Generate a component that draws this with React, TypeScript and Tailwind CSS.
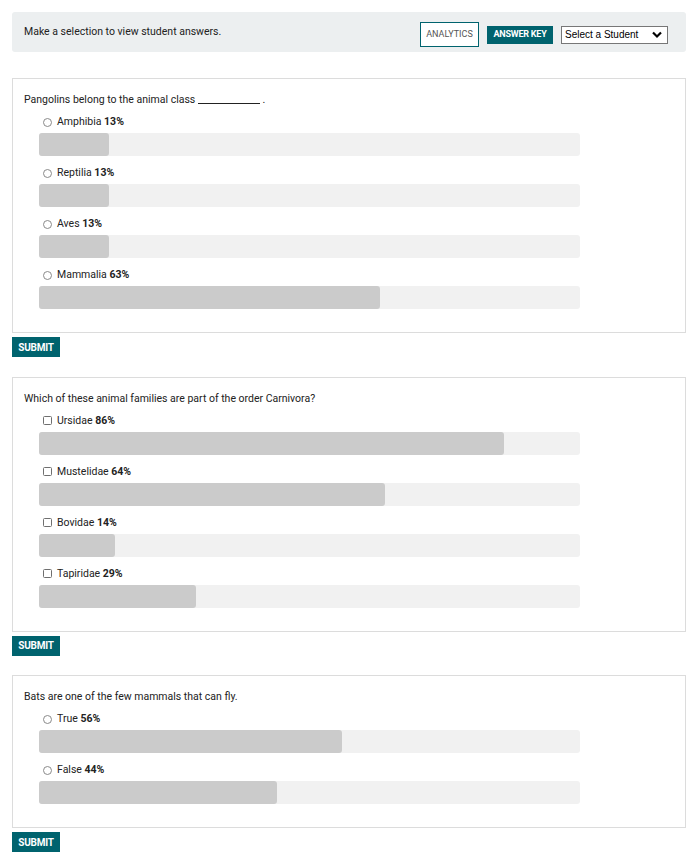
import { useState } from "react";

type Option = { label: string; pct: number };
type Question = { text: React.ReactNode; kind: "radio" | "checkbox"; options: Option[] };

const questions: Question[] = [
  {
    text: (
      <>
        Pangolins belong to the animal class <span className="inline-block w-[62px] border-b border-[#222] translate-y-[1px]" /> .
      </>
    ),
    kind: "radio",
    options: [
      { label: "Amphibia", pct: 13 },
      { label: "Reptilia", pct: 13 },
      { label: "Aves", pct: 13 },
      { label: "Mammalia", pct: 63 },
    ],
  },
  {
    text: "Which of these animal families are part of the order Carnivora?",
    kind: "checkbox",
    options: [
      { label: "Ursidae", pct: 86 },
      { label: "Mustelidae", pct: 64 },
      { label: "Bovidae", pct: 14 },
      { label: "Tapiridae", pct: 29 },
    ],
  },
  {
    text: "Bats are one of the few mammals that can fly.",
    kind: "radio",
    options: [
      { label: "True", pct: 56 },
      { label: "False", pct: 44 },
    ],
  },
];

export default function App() {
  const [open, setOpen] = useState(false);

  return (
    <div className="min-h-[866px] bg-white px-3 pt-3 text-[#222] font-['Roboto',sans-serif]">
      {/* top bar */}
      <div className="flex h-10 items-center rounded-[3px] bg-[#eceff0] pl-3 pr-[18px]">
        <p className="flex-1 text-[10.5px] leading-4">Make a selection to view student answers.</p>
        <button className="mt-[5px] h-[25px] w-[59px] border border-[#00636e] bg-white text-[9px] text-[#555]">
          ANALYTICS
        </button>
        <button className="ml-2 mt-[5px] h-[18px] w-[66px] bg-[#00636e] text-[9px] font-bold text-white tracking-tight">
          ANSWER KEY
        </button>
        <div
          onClick={() => setOpen(!open)}
          className="ml-2 mt-[5px] flex h-[18px] w-[107px] items-center justify-between border border-[#777] bg-white pl-[3px] pr-[5px] text-[10px] text-black font-['Liberation_Sans',sans-serif]"
        >
          <span>Select a Student</span>
          <svg className="h-[8px] w-[10px]" viewBox="0 0 10 8" fill="none">
            <path d="M1 1.5 L5 5.5 L9 1.5" stroke="#000" strokeWidth="2.2" />
          </svg>
        </div>
      </div>

      <div className="mt-[26px]">
        {questions.map((q, qi) => (
          <div key={qi} className="mb-[19px]">
            <div className="border border-[#dcdcdc] pl-[11px] pt-[13px] pb-[15px]">
              <p className="h-4 text-[10.5px] leading-4">{q.text}</p>
              <div className="mt-[6px] w-[556px] pl-[15px]">
                {q.options.map((o) => (
                  <div key={o.label} className="mb-[9px] last:mb-2">
                    <div className="flex h-4 items-center pl-1 text-[10.5px]">
                      {q.kind === "radio" ? (
                        <span className="h-[9px] w-[9px] rounded-full border border-[#8a8a8a]" />
                      ) : (
                        <span className="h-[9px] w-[9px] rounded-[1.5px] border border-[#6f6f6f]" />
                      )}
                      <span className="ml-[5px]">
                        {o.label} <span className="font-bold">{o.pct}%</span>
                      </span>
                    </div>
                    <div className="mt-[3px] h-[23px] w-full rounded-[3px] bg-[#f1f1f1]">
                      <div
                        className="h-full rounded-[3px] bg-[#cbcbcb]"
                        style={{ width: `${o.pct}%` }}
                      />
                    </div>
                  </div>
                ))}
              </div>
            </div>
            <button className="mt-1 h-5 w-12 bg-[#00636e] text-[10px] font-bold tracking-tight text-white">
              SUBMIT
            </button>
          </div>
        ))}
      </div>
    </div>
  );
}
